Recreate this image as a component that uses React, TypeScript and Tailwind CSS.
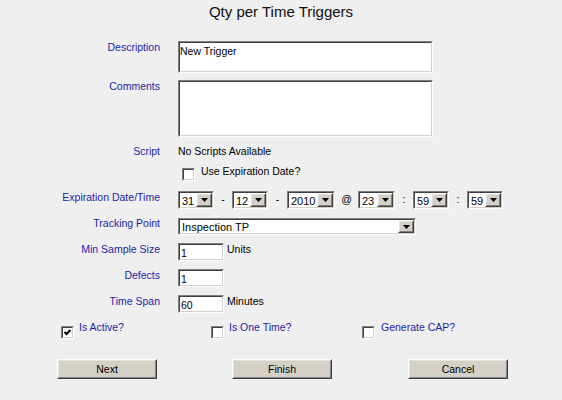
import React from "react";

const LBL = "w-[160px] shrink-0 text-right text-[#1e1ea6] leading-[13px]";

function Sunken({ className = "", children }: { className?: string; children?: React.ReactNode }) {
  return (
    <div className={"shrink-0 border border-t-[#808080] border-l-[#808080] border-b-white border-r-white " + className}>
      <div className="flex h-full w-full border border-t-[#404040] border-l-[#404040] border-b-[#d4d0c8] border-r-[#d4d0c8] bg-white">
        {children}
      </div>
    </div>
  );
}

function Raised({ className = "", children }: { className?: string; children?: React.ReactNode }) {
  return (
    <div className={"shrink-0 border border-t-white border-l-white border-b-[#404040] border-r-[#404040] bg-[#d4d0c8] " + className}>
      <div className="flex h-full w-full items-center justify-center border border-t-[#e4e2dc] border-l-[#e4e2dc] border-b-[#808080] border-r-[#808080]">
        {children}
      </div>
    </div>
  );
}

function Arrow() {
  return (
    <svg width="7" height="4" viewBox="0 0 7 4">
      <path d="M0 0H7L3.5 4Z" fill="#000" />
    </svg>
  );
}

function Drop({ className = "", value }: { className?: string; value: string }) {
  return (
    <Sunken className={"h-[18px] " + className}>
      <span className="flex-1 pl-[2px] pt-[1px] text-[11px] leading-[14px] text-black">{value}</span>
      <Raised className="h-full w-[16px]">
        <Arrow />
      </Raised>
    </Sunken>
  );
}

function Check({ checked = false, className = "" }: { checked?: boolean; className?: string }) {
  return (
    <Sunken className={"h-[13px] w-[13px] " + className}>
      {checked && (
        <svg width="9" height="9" viewBox="0 0 9 9" className="block">
          <polyline points="1.5,4 3.5,6 7.5,2" fill="none" stroke="#000" strokeWidth="2" />
        </svg>
      )}
    </Sunken>
  );
}

function Sep({ className = "", ch }: { className?: string; ch: string }) {
  return <div className={"shrink-0 text-center leading-[16px] text-black " + className}>{ch}</div>;
}

export default function App() {
  return (
    <div className="h-[400px] w-[562px] overflow-hidden bg-[#efefef] font-['Liberation_Sans',Arial,sans-serif] text-[10.5px] text-black">
      <div className="h-[24px] text-center text-[15px] leading-[24px] text-[#111]">Qty per Time Triggers</div>

      <div className="mt-[17px] flex items-start">
        <div className={LBL}>Description</div>
        <Sunken className="ml-[18px] h-[32px] w-[255px]">
          <span className="pt-[2px] leading-[13px] text-black">New Trigger</span>
        </Sunken>
      </div>

      <div className="mt-[7px] flex items-start">
        <div className={LBL}>Comments</div>
        <Sunken className="ml-[18px] h-[57px] w-[255px]" />
      </div>

      <div className="mt-[8px] flex items-start">
        <div className={LBL}>Script</div>
        <div className="ml-[18px] leading-[13px] text-black">No Scripts Available</div>
      </div>

      <div className="ml-[182px] mt-[7px] flex items-start">
        <Check className="mt-[3px]" />
        <div className="ml-[6px] leading-[13px] text-black">Use Expiration Date?</div>
      </div>

      <div className="mt-[10px] flex items-start">
        <div className={LBL}>Expiration Date/Time</div>
        <div className="ml-[18px] flex items-start">
          <Drop className="w-[36px]" value="31" />
          <Sep className="w-[18px]" ch="-" />
          <Drop className="w-[36px]" value="12" />
          <Sep className="w-[19px]" ch="-" />
          <Drop className="w-[48px]" value="2010" />
          <Sep className="w-[23px]" ch="@" />
          <Drop className="w-[37px]" value="23" />
          <Sep className="w-[18px]" ch=":" />
          <Drop className="w-[36px]" value="59" />
          <Sep className="w-[18px]" ch=":" />
          <Drop className="w-[36px]" value="59" />
        </div>
      </div>

      <div className="mt-[9px] flex items-start">
        <div className={LBL + " -mt-[1px]"}>Tracking Point</div>
        <Sunken className="ml-[18px] h-[17px] w-[238px]">
          <span className="flex-1 pl-[2px] pt-[1px] text-[11px] leading-[13px] text-black">Inspection TP</span>
          <Raised className="h-full w-[16px]">
            <Arrow />
          </Raised>
        </Sunken>
      </div>

      <div className="mt-[8px] flex items-start">
        <div className={LBL}>Min Sample Size</div>
        <Sunken className="ml-[18px] h-[18px] w-[46px]">
          <span className="pl-[1px] pt-[2px] leading-[13px] text-black">1</span>
        </Sunken>
        <div className="ml-[3px] leading-[13px] text-black">Units</div>
      </div>

      <div className="mt-[8px] flex items-start">
        <div className={LBL}>Defects</div>
        <Sunken className="ml-[18px] h-[18px] w-[46px]">
          <span className="pl-[1px] pt-[2px] leading-[13px] text-black">1</span>
        </Sunken>
      </div>

      <div className="mt-[8px] flex items-start">
        <div className={LBL}>Time Span</div>
        <Sunken className="ml-[18px] h-[18px] w-[46px]">
          <span className="pl-[1px] pt-[2px] leading-[13px] text-black">60</span>
        </Sunken>
        <div className="ml-[3px] leading-[13px] text-black">Minutes</div>
      </div>

      <div className="mt-[8px] flex items-start pl-[61px]">
        <div className="flex w-[150px] items-start">
          <Check checked className="mt-[5px]" />
          <div className="ml-[5px] leading-[13px] text-[#1e1ea6]">Is Active?</div>
        </div>
        <div className="flex w-[151px] items-start">
          <Check className="mt-[5px]" />
          <div className="ml-[5px] leading-[13px] text-[#1e1ea6]">Is One Time?</div>
        </div>
        <div className="flex items-start">
          <Check className="mt-[5px]" />
          <div className="ml-[6px] leading-[13px] text-[#1e1ea6]">Generate CAP?</div>
        </div>
      </div>

      <div className="mt-[20px] flex items-start pl-[57px]">
        <Raised className="h-[20px] w-[100px]">
          <span className="leading-[14px] text-black">Next</span>
        </Raised>
        <Raised className="ml-[75px] h-[20px] w-[100px]">
          <span className="leading-[14px] text-black">Finish</span>
        </Raised>
        <Raised className="ml-[76px] h-[20px] w-[100px]">
          <span className="leading-[14px] text-black">Cancel</span>
        </Raised>
      </div>
    </div>
  );
}
